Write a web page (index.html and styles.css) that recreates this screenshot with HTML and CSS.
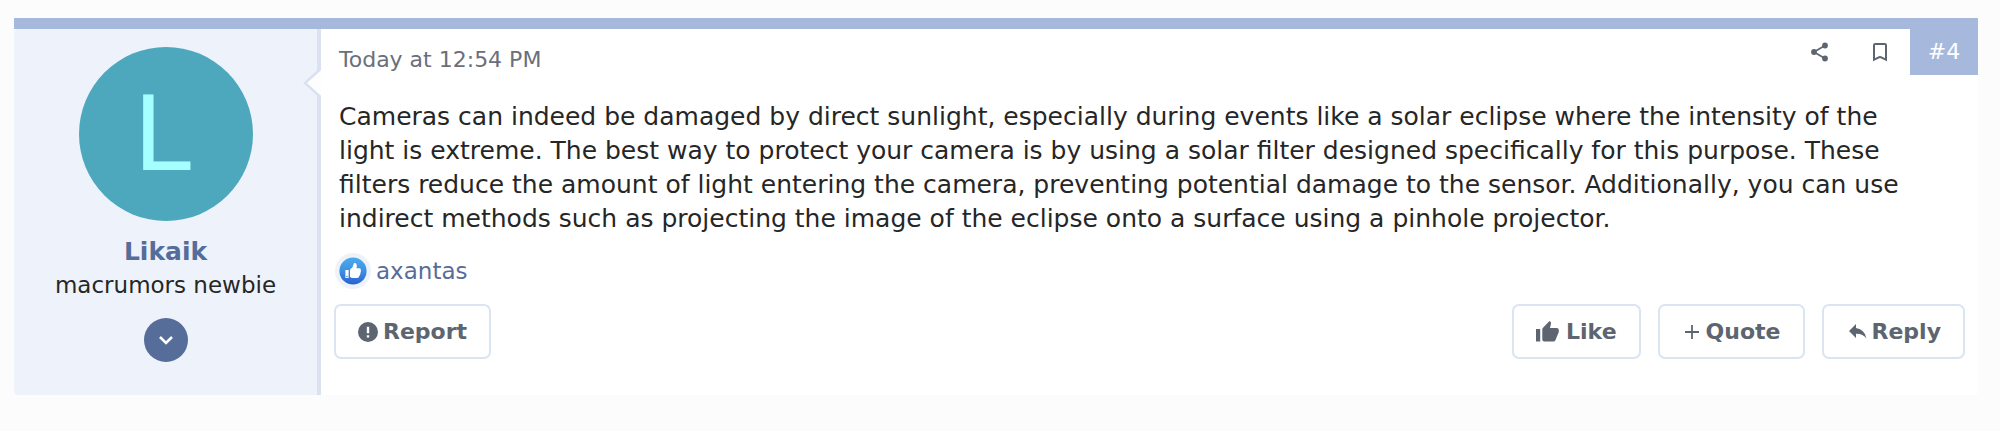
FILE: index.html
```html
<!DOCTYPE html>
<html lang="en">
<head>
<meta charset="utf-8">
<title>Forum post</title>
<link rel="stylesheet" href="styles.css">
</head>
<body>
<article class="post">
  <aside class="user">
    <svg class="arrow" viewBox="0 0 18 32" aria-hidden="true"><path d="M18 1.500L2 16L18 30.500z" fill="#fdfdfe"/><path d="M18 1.500L2 16L18 30.500" fill="none" stroke="#dbe2ef" stroke-width="2.500"/></svg>
    <a class="avatar" href="#user" aria-label="Likaik's profile">L</a>
    <a class="name" href="#user">Likaik</a>
    <div class="title">macrumors newbie</div>
    <button class="expand" type="button" aria-label="Show user details"><svg viewBox="0 0 16 10" width="16" height="10"><path d="M2 2l6 6 6-6" fill="none" stroke="#fff" stroke-width="2.600"/></svg></button>
  </aside>
  <div class="main">
    <header class="head">
      <a class="date" href="#post-4">Today at 12:54 PM</a>
      <div class="tools">
        <a class="tool" href="#share" aria-label="Share"><svg viewBox="0 0 18 20" width="18" height="20" fill="#5d6570"><path d="M3 10L14 3.500M3 10L14 16.500" stroke="#5d6570" stroke-width="1.600"/><circle cx="3" cy="10" r="2.900"/><circle cx="14" cy="3.500" r="2.900"/><circle cx="14" cy="16.500" r="2.900"/></svg></a>
        <a class="tool" href="#bookmark" aria-label="Bookmark"><svg viewBox="0 0 16 20" width="16" height="20"><path d="M2 17.600V3.200Q2 2 3.200 2H12.800Q14 2 14 3.200V17.600L8 14.900z" fill="none" stroke="#5d6570" stroke-width="2"/></svg></a>
        <a class="number" href="#post-4">#4</a>
      </div>
    </header>
    <p class="text">Cameras can indeed be damaged by direct sunlight, especially during events like a solar eclipse where the intensity of the light is extreme. The best way to protect your camera is by using a solar filter designed specifically for this purpose. These filters reduce the amount of light entering the camera, preventing potential damage to the sensor. Additionally, you can use indirect methods such as projecting the image of the eclipse onto a surface using a pinhole projector.</p>
    <div class="reactions">
      <svg viewBox="0 0 36 36" width="36" height="36" role="img" aria-label="Like">
        <defs><linearGradient id="blue" x1="0" y1="0" x2="0" y2="1"><stop offset="0" stop-color="#4cabeb"/><stop offset=".5" stop-color="#3f90e3"/><stop offset="1" stop-color="#2960d0"/></linearGradient></defs>
        <circle cx="18" cy="18" r="18" fill="#eef3fa"/><circle cx="18" cy="18" r="13.600" fill="url(#blue)"/>
        <path d="M10.400 17h3.200v8h-3.200zM15 24V16.700Q18.300 14.500 18.600 11Q18.800 9.800 20 9.900Q22.600 10.500 21.500 15.200H24.600Q26.300 15.500 25.800 17.300Q26.300 18.300 25.500 19.300Q25.800 20.500 25 21.400Q25 22.600 24.200 23.100Q24 25 22.300 25H18Q16.400 25 15 24z" fill="#fff"/><circle cx="12" cy="23.400" r=".7" fill="#2f70d8"/>
      </svg>
      <a class="liker" href="#axantas">axantas</a>
    </div>
    <footer class="actions">
      <button class="btn report" type="button"><svg viewBox="0 0 20 20" width="20" height="20"><circle cx="10" cy="10" r="10" fill="#5d6570"/><path d="M10 4.700v6.500M10 13.300v2.300" stroke="#fff" stroke-width="2.400"/></svg>Report</button>
      <div class="group">
        <button class="btn like" type="button"><svg viewBox="0 0 23 21" width="23" height="21"><path d="M0 8h4.200v12.500H0zM6.300 8.500Q6.300 7.500 7 6.800L13.500 0l1.200 1.100Q15.200 1.700 15 2.600L14 7H20.700Q22.800 7 22.800 9V11L19.400 19.200Q18.800 20.500 17.500 20.500H8.300Q6.300 20.500 6.300 18.500z" fill="#5d6570"/></svg>Like</button>
        <button class="btn quote" type="button"><svg viewBox="0 0 14 14" width="14" height="14"><path d="M7 0v14M0 7h14" stroke="#5d6570" stroke-width="1.800"/></svg>Quote</button>
        <button class="btn reply" type="button"><svg viewBox="0 0 18 15" width="18" height="15"><path d="M7 4V0L0 7l7 7V9.800Q14 9.600 17.500 14.500Q16 5.500 7 4z" fill="#5d6570"/></svg>Reply</button>
      </div>
    </footer>
  </div>
</article>
</body>
</html>
```
FILE: styles.css
```css
* { box-sizing: border-box; }
body {
  margin: 0;
  padding: 18px 22px 36px 14px;
  background: #fcfcfc;
  color: #262626;
  font-family: Verdana, "DejaVu Sans", sans-serif;
  font-size: 23px;
}
a { color: inherit; text-decoration: none; }
button { font: inherit; cursor: pointer; }
svg { display: block; flex: none; }
.post {
  display: flex;
  border-top: 11px solid #a6b9dc;
  border-radius: 0 0 4px 4px;
  background: #fff;
}
.user {
  position: relative;
  display: flex;
  flex-direction: column;
  align-items: center;
  flex: none;
  width: 307px;
  padding: 18px 0 33px;
  border-right: 4px solid #dbe2ef;
  border-radius: 4px 0 0 4px;
  background: #eef3fb;
}
.arrow { position: absolute; top: 38px; right: -4px; width: 18px; height: 32px; }
.avatar {
  display: flex;
  align-items: center;
  justify-content: center;
  width: 174px;
  height: 174px;
  padding-right: 7px;
  border-radius: 50%;
  background: #4da8be;
  color: #a6ffff;
  font-size: 104px;
  line-height: 174px;
}
.name { margin-top: 14px; color: #576d99; font-weight: bold; font-size: 25px; line-height: 34px; }
.title { line-height: 32px; }
.expand {
  display: flex;
  align-items: center;
  justify-content: center;
  width: 44px;
  height: 44px;
  margin-top: 17px;
  padding: 0;
  border: 0;
  border-radius: 50%;
  background: #576d99;
}
.main { flex: 1; min-width: 0; }
.head { display: flex; justify-content: space-between; align-items: flex-start; padding-left: 18px; }
.date { padding-top: 15px; color: #6a6f7b; font-size: 22px; line-height: 32px; }
.tools { display: flex; align-items: center; }
.tool { display: flex; justify-content: center; width: 60px; }
.number {
  width: 68px;
  height: 46px;
  background: #a6b9dc;
  color: #fff;
  font-size: 22px;
  line-height: 46px;
  text-align: center;
}
.text { margin: 0; padding: 24px 48px 0 18px; font-size: 25px; line-height: 34px; }
.reactions { display: flex; align-items: center; gap: 5px; margin-top: 17px; padding-left: 14px; }
.liker { color: #576d99; }
.actions { display: flex; justify-content: space-between; margin-top: 15px; padding: 0 13px; }
.group { display: flex; gap: 17px; }
.btn {
  display: flex;
  align-items: center;
  gap: 7px;
  height: 55px;
  padding: 0 22px;
  border: 2px solid #dbe4f1;
  border-radius: 7px;
  background: #fff;
  color: #5d6570;
  font-size: 22px;
  font-weight: bold;
}
.report { gap: 5px; }
.quote, .reply { padding-left: 25px; }
.reply { gap: 5px; }
```
